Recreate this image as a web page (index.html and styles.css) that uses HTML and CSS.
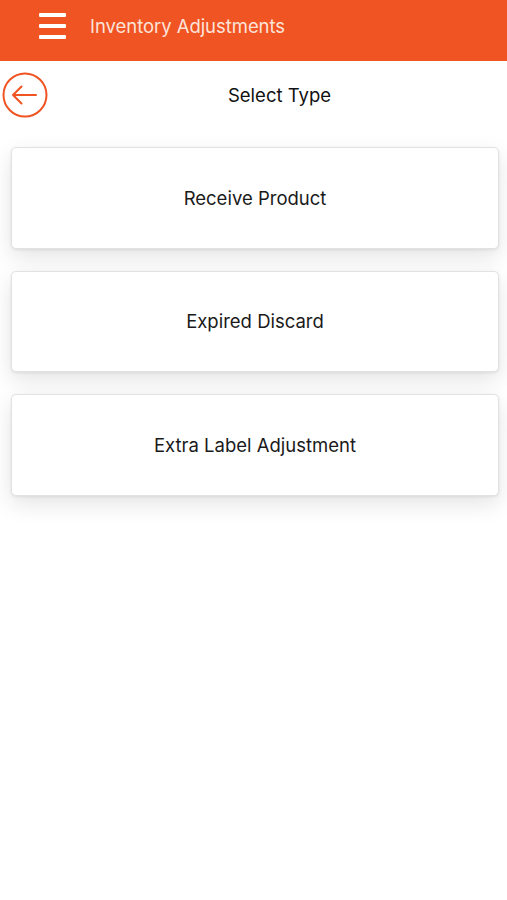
FILE: index.html
```html
<!DOCTYPE html>
<html>
<head>
<meta charset="utf-8">
<link rel="stylesheet" href="styles.css">
</head>
<body>
<header class="topbar">
  <div class="menu">
    <span></span><span></span><span></span>
  </div>
  <div class="title">Inventory Adjustments</div>
</header>
<div class="subbar">
  <svg class="back" width="46" height="46" viewBox="0 0 46 46">
    <circle cx="23" cy="23" r="21.5" fill="none" stroke="#F05423" stroke-width="2"/>
    <path d="M11 23 H34 M11 23 L19.5 14.5 M11 23 L19.5 31.5" fill="none" stroke="#F05423" stroke-width="2" stroke-linecap="round" stroke-linejoin="round"/>
  </svg>
  <div class="subtitle">Select Type</div>
</div>
<main class="list">
  <div class="card">Receive Product</div>
  <div class="card">Expired Discard</div>
  <div class="card">Extra Label Adjustment</div>
</main>
</body>
</html>
```
FILE: styles.css
```css
html, body {
  margin: 0;
  padding: 0;
  background: #fff;
  font-family: "Inter", "Roboto", "Liberation Sans", sans-serif;
}
body {
  min-height: 900px;
}
.topbar {
  height: 61px;
  background: #F05423;
  display: flex;
  align-items: center;
  box-sizing: border-box;
  padding-left: 39px;
}
.menu {
  width: 27px;
  display: flex;
  flex-direction: column;
  gap: 7px;
  margin-top: -9px;
}
.menu span {
  display: block;
  height: 4px;
  background: #fff;
  border-radius: 1px;
}
.title {
  margin-left: 24px;
  margin-top: -9px;
  color: #FCE3D9;
  font-size: 18.5px;
  letter-spacing: -0.05px;
}
.subbar {
  height: 70px;
  display: flex;
  align-items: center;
  margin-top: -1px;
}
.back {
  margin-left: 2px;
  flex: none;
}
.subtitle {
  flex: 1;
  text-align: center;
  font-size: 18.5px;
  color: #111;
  margin-right: 22px;
  margin-left: -26px;
  padding-left: 52px;
}
.list {
  padding: 17px 8px 40px 11px;
  display: flex;
  flex-direction: column;
  gap: 22px;
}
.card {
  height: 101.5px;
  box-sizing: border-box;
  background: #fff;
  border-radius: 5px;
  border: 1px solid #e2e2e2;
  box-shadow: 0 8px 22px rgba(0,0,0,0.11), 0 1px 3px rgba(0,0,0,0.08);
  display: flex;
  align-items: center;
  justify-content: center;
  font-size: 18.5px;
  color: #1a1a1a;
}
```
